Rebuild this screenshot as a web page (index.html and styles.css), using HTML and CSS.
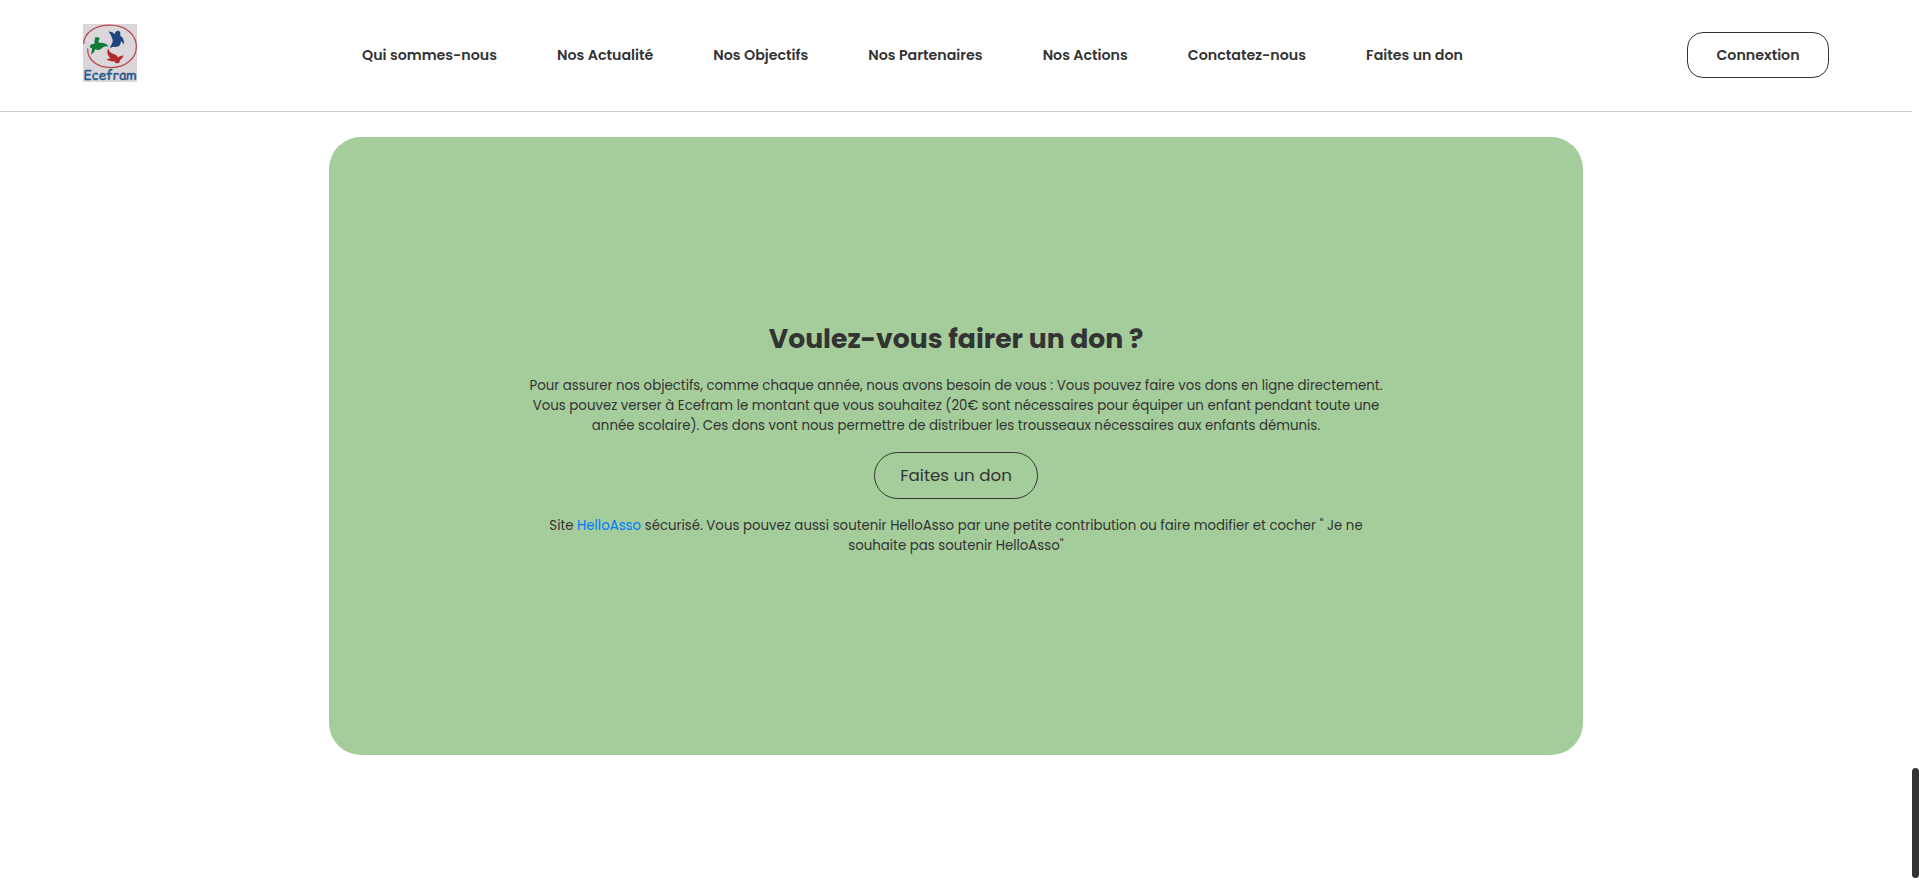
FILE: index.html
```
<!DOCTYPE html>
<html lang="fr">
<head>
<meta charset="utf-8">
<title>Ecefram</title>
<link rel="stylesheet" href="styles.css">
</head>
<body>
<header class="header">
  <a class="brand" href="#">
    <svg class="logo" width="54" height="58" viewBox="0 0 54 58">
      <rect width="54" height="58" fill="#dbd6d9"/>
      <path d="M.6 20C1.200 8.500 12 1.200 27 1.200S53.400 10 53.400 22.500 41.500 43.600 28 43.600C14.500 43.600 4.600 36.500 4.600 24.500" fill="none" stroke="#b8484c" stroke-width="1.300"/>
      <path d="M25.500 7.400Q30 7.500 31.800 10.600C32 7.500 34 6.200 36.400 7.200Q38 8.500 37.200 11.600C39.800 13.200 41.200 16 41 20.400L37.800 16.800C38.200 20.500 36.200 23 32.600 22.900Q29.500 22.600 27 24.200C27.500 21 30.300 18.800 29.600 15.400Q28.500 11 25.500 7.400z" fill="#1d4480"/>
      <path d="M12.600 13Q16.200 13.600 17 14.200C15.800 15.600 15.300 17.200 15.600 18.700C20 18.400 24.200 19.200 25.800 22.800C22.500 21.600 20.600 22.800 18 24.900C15.800 26.400 13.600 26 12 25.200Q11.800 28.600 7.800 30.600Q9.200 27 9 24.300C7 24.200 6.400 22.600 7.200 21.400Q8.500 19.600 11.200 20.200C11.800 17.500 11.200 15.500 12.600 13z" fill="#147a3c"/>
      <path d="M25.400 24.200C25.800 27 27.200 28.800 30 29.800C32.800 30.600 34.400 31.600 35 33.400Q37.500 31.200 40.600 31.400Q39.600 34.500 36.800 36.600C37.200 38.600 35.600 39.600 33.600 39.200Q32 38.800 31.500 37.400C28.800 37.600 26 37 23.400 35.200L27.400 34.200C24.300 31.200 23.500 27.600 25.400 24.200z" fill="#b32a2d"/>
      <text class="logo-text" x=".5" y="55.700" textLength="53" lengthAdjust="spacingAndGlyphs">Ecefram</text>
    </svg>
  </a>
  <nav class="nav">
    <a href="#">Qui sommes-nous</a>
    <a href="#">Nos Actualité</a>
    <a href="#">Nos Objectifs</a>
    <a href="#">Nos Partenaires</a>
    <a href="#">Nos Actions</a>
    <a href="#">Conctatez-nous</a>
    <a href="#">Faites un don</a>
  </nav>
  <a class="login" href="#">Connextion</a>
</header>
<main class="card">
  <h1 class="title">Voulez-vous fairer un don ?</h1>
  <p class="text">Pour assurer nos objectifs, comme chaque année, nous avons besoin de vous : Vous pouvez faire vos dons en ligne directement. Vous pouvez verser à Ecefram le montant que vous souhaitez (20€ sont nécessaires pour équiper un enfant pendant toute une année scolaire). Ces dons vont nous permettre de distribuer les trousseaux nécessaires aux enfants démunis.</p>
  <a class="donate" href="#">Faites un don</a>
  <p class="text">Site <a class="link" href="#">HelloAsso</a> sécurisé. Vous pouvez aussi soutenir HelloAsso par une petite contribution ou faire modifier et cocher " Je ne souhaite pas soutenir HelloAsso"</p>
</main>
<div class="scroll-thumb"></div>
</body>
</html>
```
FILE: styles.css
```
* { box-sizing: border-box; }
html, body { height: 100%; overflow: hidden; }
body {
  margin: 0;
  padding-right: 7px;
  background: #fff;
  color: #333;
  font-family: Poppins, sans-serif;
}
a { color: inherit; text-decoration: none; white-space: nowrap; }

.header {
  display: flex;
  height: 112px;
  padding: 0 83px;
  border-bottom: 1px solid #ccc;
}
.brand { width: 279px; padding-top: 24px; }
.logo { display: block; overflow: visible; }
.logo-text {
  font: 400 13.500px "Comic Relief", "Comic Sans MS", sans-serif;
  fill: #1f5a8c;
  stroke: #1f5a8c;
  stroke-width: .4px;
}
.nav {
  display: flex;
  gap: 60.1px;
  height: 110px;
  align-items: center;
  font-size: 14.220px;
  font-weight: 600;
}
.login {
  width: 142px;
  height: 46px;
  margin: 32px 0 0 auto;
  border: 1px solid #333;
  border-radius: 16px;
  font-size: 14.220px;
  font-weight: 600;
  line-height: 44px;
  text-align: center;
}

.card {
  display: flex;
  flex-direction: column;
  align-items: center;
  width: 1254px;
  height: 618px;
  margin: 25px auto 0;
  padding-top: 181px;
  border-radius: 32px;
  background: #a5cd9b;
  text-align: center;
}
.title {
  margin: 0 0 16px;
  font-size: 26.667px;
  font-weight: 700;
  line-height: 42px;
}
.text {
  width: 868px;
  margin: 0;
  font-size: 13.333px;
  line-height: 20px;
}
.link { color: #007bff; }
.donate {
  width: 164px;
  height: 47px;
  margin: 16px 0 17px;
  border: 1px solid #333;
  border-radius: 24px;
  font-size: 16.667px;
  line-height: 45px;
}
.scroll-thumb {
  position: fixed;
  right: 0;
  top: 768px;
  width: 7px;
  height: 110px;
  border-radius: 4px;
  background: #333;
}
```
